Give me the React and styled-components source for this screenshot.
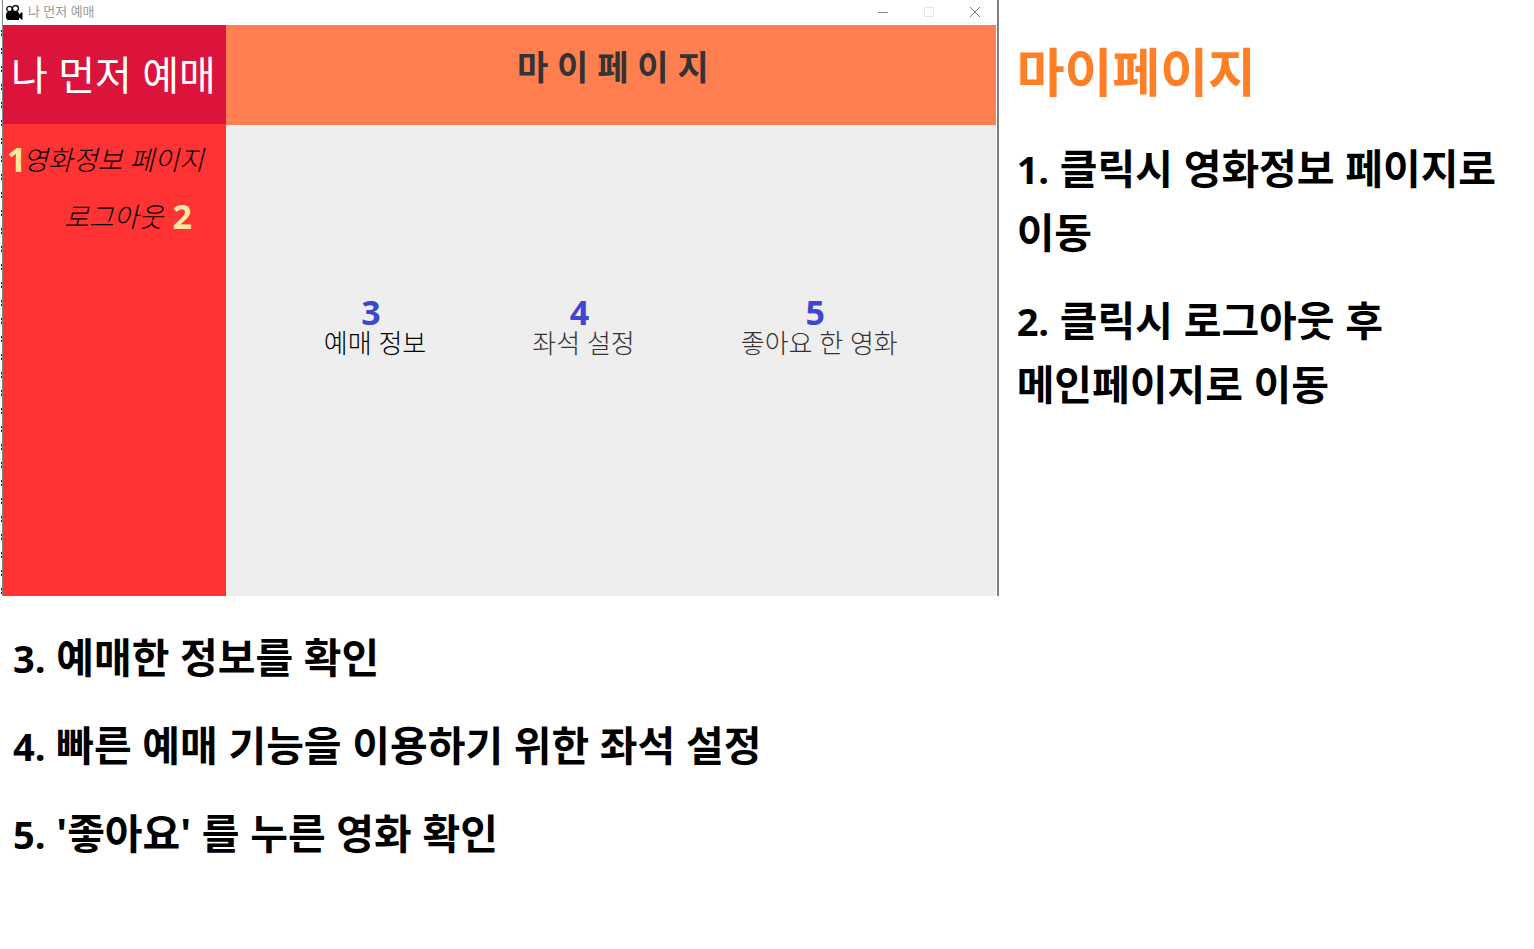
import React from "react";
import styled, { createGlobalStyle } from "styled-components";

const GlobalStyle = createGlobalStyle`
  * { box-sizing: border-box; }
  body {
    margin: 0;
    background: #fff;
    color: #000;
    font-family: "Open Sans", "Noto Sans CJK KR", sans-serif;
  }
  h1, h2, p, ul { margin: 0; padding: 0; }
  button { border: 0; padding: 0; background: none; color: inherit; font: inherit; cursor: pointer; }
`;

const Page = styled.main`
  padding-bottom: 64px;
`;

/* The editor behind the window shows as a dashed sliver along its left edge. */
const Top = styled.div`
  display: grid;
  grid-template-columns: 65.1% 1fr;
  background: repeating-linear-gradient(
      to bottom,
      #fff 0 12px,
      #222 12px 14px,
      #b8c8d0 14px 16px,
      #222 16px 18px
    )
    1px 18px / 1px 100% no-repeat;
`;

const AppWindow = styled.section`
  display: flex;
  flex-direction: column;
  margin-left: 2px;
  border-left: 1px solid #7d8a92;
  border-right: 2px solid #808080;
  padding-right: 1px;
`;

const TitleBar = styled.header`
  display: flex;
  align-items: center;
  gap: 5px;
  height: 25px;
  padding-left: 3px;
  color: #999;
  font-size: 13px;
  line-height: 20px;
`;

const TitleText = styled.span`
  flex: 1;
  padding-bottom: 4px;
`;

const WindowButton = styled.button`
  display: grid;
  place-items: center;
  width: 41px;
  height: 24px;
  padding-bottom: 2px;
`;

const WindowBody = styled.div`
  display: grid;
  grid-template-columns: 223px 1fr;
`;

const Sidebar = styled.nav`
  background: #ff3333;
`;

const Brand = styled.div`
  height: 99px;
  padding: 22px 0 0 8px;
  background: #dc143c;
  color: #fff;
  font-size: 40px;
  line-height: 56px;
  white-space: nowrap;
`;

const SideList = styled.ul`
  display: flex;
  flex-direction: column;
  gap: 17px;
  padding-top: 15px;
  list-style: none;
`;

const SideItem = styled.li`
  display: flex;
  align-items: center;
  gap: ${(p) => (p.$indent ? 9 : 0)}px;
  height: 40px;
  padding-left: ${(p) => (p.$indent ? 61 : 4)}px;
  white-space: nowrap;
`;

const SideButton = styled.button`
  padding-top: 2px;
  font-size: 27px;
  font-style: italic;
  font-weight: 300;
  line-height: 40px;
`;

const Mark = styled.span`
  width: ${(p) => (p.$narrow ? "16px" : "auto")};
  color: #ffe9a0;
  font-size: 34px;
  font-weight: 700;
  line-height: 40px;
`;

const MenuMark = styled(Mark)`
  padding-right: 8px;
  color: #3f48cc;
  line-height: 30px;
`;

const Content = styled.div`
  background: #eee;
`;

const Banner = styled.div`
  height: 100px;
  padding: 18px 0 0 4px;
  background: #ff7f50;
  color: #333;
  text-align: center;
`;

const BannerTitle = styled.h1`
  font-size: 34px;
  font-weight: 700;
  line-height: 48px;
`;

const Menu = styled.div`
  display: flex;
  justify-content: center;
  align-items: flex-start;
  gap: 106px;
  min-height: 471px;
  padding-top: 172px;
`;

const MenuItem = styled.button`
  display: flex;
  flex-direction: column;
  align-items: center;
  color: ${(p) => p.$color || "#333"};
  font-size: 26px;
  font-weight: 300;
  line-height: 32px;
  white-space: nowrap;
`;

const Notes = styled.aside`
  padding: 36px 0 0 18px;
`;

const NotesTitle = styled.h2`
  margin-bottom: 28px;
  color: #ff7f27;
  font-size: 52px;
  font-weight: 700;
  line-height: 72px;
`;

const Note = styled.p`
  margin-bottom: 24px;
  font-size: 41px;
  font-weight: 700;
  line-height: 64px;
  word-break: keep-all;
`;

const NoteNumber = styled.span`
  font-size: 38px;
  line-height: 1;
`;

const BottomNotes = styled.section`
  padding: 29px 13px 0;
`;

function CameraIcon() {
  return (
    <svg width="17" height="16" viewBox="0 0 17 16" aria-hidden="true">
      <circle cx="3.5" cy="4" r="2.7" fill="#fff" stroke="#000" strokeWidth="1.3" />
      <circle cx="9.5" cy="3.6" r="3" fill="#fff" stroke="#000" strokeWidth="1.3" />
      <path d="M5 6h3v2H5zM1 7h11q1 0 1 2h1l1-1.500h1.500v7H15l-1-1.500h-1V15H1.500L0 13V9z" fill="#000" />
    </svg>
  );
}

export default function App() {
  return (
    <>
      <GlobalStyle />
      <Page>
        <Top>
          <AppWindow>
            <TitleBar>
              <CameraIcon />
              <TitleText>나 먼저 예매</TitleText>
              <WindowButton aria-label="최소화">
                <svg width="10" height="10"><path d="M0 5.5h10" stroke="#888" /></svg>
              </WindowButton>
              <WindowButton aria-label="최대화">
                <svg width="10" height="10"><path d="M.5.5h9v9h-9z" fill="none" stroke="#e6e6e6" /></svg>
              </WindowButton>
              <WindowButton aria-label="닫기">
                <svg width="10" height="10"><path d="M0 0l10 10M10 0L0 10" stroke="#777" /></svg>
              </WindowButton>
            </TitleBar>
            <WindowBody>
              <Sidebar>
                <Brand>나 먼저 예매</Brand>
                <SideList>
                  <SideItem>
                    <Mark $narrow>1</Mark>
                    <SideButton>영화정보 페이지</SideButton>
                  </SideItem>
                  <SideItem $indent>
                    <SideButton>로그아웃</SideButton>
                    <Mark>2</Mark>
                  </SideItem>
                </SideList>
              </Sidebar>
              <Content>
                <Banner>
                  <BannerTitle>마 이 페 이 지</BannerTitle>
                </Banner>
                <Menu>
                  <MenuItem $color="#000"><MenuMark>3</MenuMark>예매 정보</MenuItem>
                  <MenuItem><MenuMark>4</MenuMark>좌석 설정</MenuItem>
                  <MenuItem><MenuMark>5</MenuMark>좋아요 한 영화</MenuItem>
                </Menu>
              </Content>
            </WindowBody>
          </AppWindow>
          <Notes>
            <NotesTitle>마이페이지</NotesTitle>
            <Note><NoteNumber>1.</NoteNumber> 클릭시 영화정보 페이지로 이동</Note>
            <Note><NoteNumber>2.</NoteNumber> 클릭시 로그아웃 후 메인페이지로 이동</Note>
          </Notes>
        </Top>
        <BottomNotes>
          <Note><NoteNumber>3.</NoteNumber> 예매한 정보를 확인</Note>
          <Note><NoteNumber>4.</NoteNumber> 빠른 예매 기능을 이용하기 위한 좌석 설정</Note>
          <Note><NoteNumber>5.</NoteNumber> '좋아요' 를 누른 영화 확인</Note>
        </BottomNotes>
      </Page>
    </>
  );
}
